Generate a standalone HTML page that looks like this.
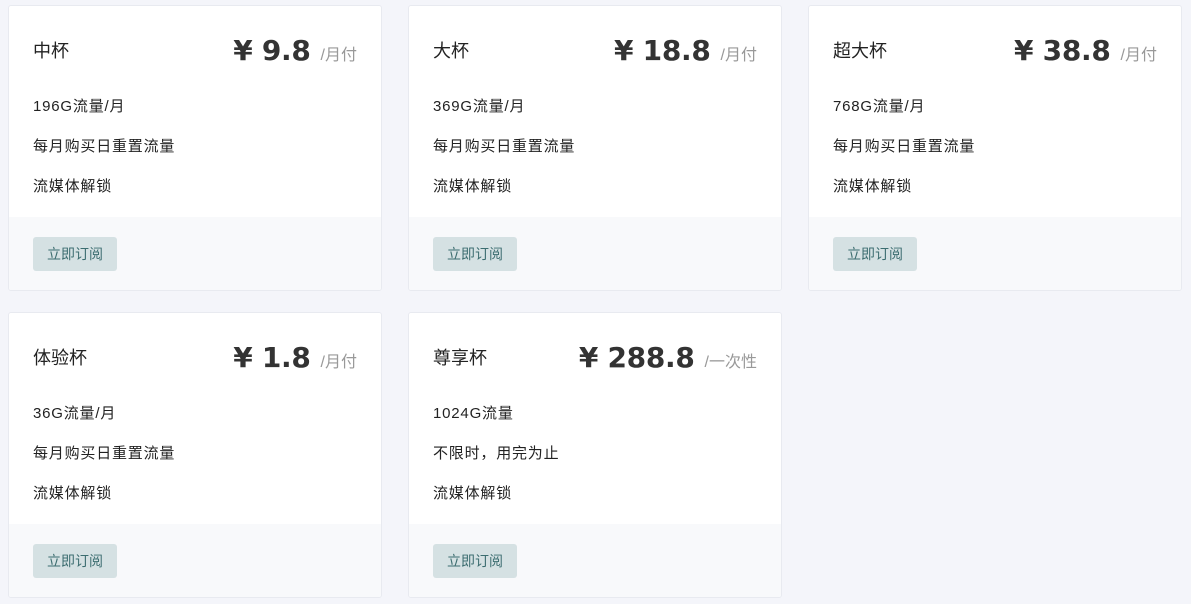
<!DOCTYPE html>
<html><head><meta charset="utf-8"><style>
*{margin:0;padding:0;box-sizing:border-box}
body{width:1191px;height:604px;background:#f4f5fa;font-family:"Liberation Sans","Noto Sans CJK SC",sans-serif;color:#333;position:relative;overflow:hidden}
.card{position:absolute;width:374px;height:286px;background:#fff;border:1px solid #e8eaf0;border-radius:3px;overflow:hidden}
.title{position:absolute;left:24px;top:31px;font-size:18px;color:#222}
.price{position:absolute;right:24px;top:28px;font-family:"DejaVu Sans","Noto Sans CJK SC",sans-serif;font-size:28px;font-weight:bold;color:#333;white-space:nowrap;letter-spacing:-0.3px}
.price small{font-family:"Liberation Sans","Noto Sans CJK SC",sans-serif;font-size:16px;font-weight:normal;color:#999;margin-left:10px;letter-spacing:0}
.f{position:absolute;left:24px;font-size:15px;letter-spacing:0.8px;color:#222}
.foot{position:absolute;left:0;right:0;top:211px;bottom:0;background:#f8f9fb}
.btn{position:absolute;left:24px;top:20px;width:84px;height:34px;background:#d5e1e3;border-radius:3px;font-size:14px;color:#3c6d70;text-align:center;line-height:34px}
</style></head><body>
<div class="card" style="left:8px;top:5px"><div class="title">中杯</div><div class="price">¥ 9.8<small>/月付</small></div>
<div class="f" style="top:89px">196G流量/月</div><div class="f" style="top:129px">每月购买日重置流量</div><div class="f" style="top:169px">流媒体解锁</div>
<div class="foot"><div class="btn">立即订阅</div></div></div>
<div class="card" style="left:408px;top:5px"><div class="title">大杯</div><div class="price">¥ 18.8<small>/月付</small></div>
<div class="f" style="top:89px">369G流量/月</div><div class="f" style="top:129px">每月购买日重置流量</div><div class="f" style="top:169px">流媒体解锁</div>
<div class="foot"><div class="btn">立即订阅</div></div></div>
<div class="card" style="left:808px;top:5px"><div class="title">超大杯</div><div class="price">¥ 38.8<small>/月付</small></div>
<div class="f" style="top:89px">768G流量/月</div><div class="f" style="top:129px">每月购买日重置流量</div><div class="f" style="top:169px">流媒体解锁</div>
<div class="foot"><div class="btn">立即订阅</div></div></div>
<div class="card" style="left:8px;top:312px"><div class="title">体验杯</div><div class="price">¥ 1.8<small>/月付</small></div>
<div class="f" style="top:89px">36G流量/月</div><div class="f" style="top:129px">每月购买日重置流量</div><div class="f" style="top:169px">流媒体解锁</div>
<div class="foot"><div class="btn">立即订阅</div></div></div>
<div class="card" style="left:408px;top:312px"><div class="title">尊享杯</div><div class="price">¥ 288.8<small>/一次性</small></div>
<div class="f" style="top:89px">1024G流量</div><div class="f" style="top:129px">不限时，用完为止</div><div class="f" style="top:169px">流媒体解锁</div>
<div class="foot"><div class="btn">立即订阅</div></div></div>
</body></html>
